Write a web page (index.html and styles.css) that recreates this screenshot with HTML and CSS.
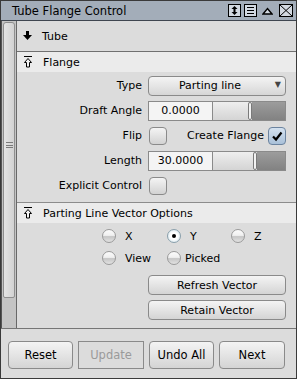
FILE: index.html
```html
<!DOCTYPE html>
<html lang="en">

<head>
  <meta charset="UTF-8">
  <title>Tube Flange Control</title>
  <link rel="stylesheet" href="styles.css">
</head>

<body>

  <div class="window">

    <div class="titlebar">
      <span class="title">Tube Flange Control</span>
      <div class="tb-icons">
        <svg class="tb-box" width="13" height="13" viewBox="0 0 13 13">
          <rect x="0.5" y="0.5" width="12" height="12" fill="#d3d9e1" stroke="#000"/>
          <polygon points="6.5,2 3.5,5 9.5,5" fill="#000"/>
          <rect x="5.5" y="4.5" width="2" height="4" fill="#000"/>
          <polygon points="3.5,8 9.5,8 6.5,11" fill="#000"/>
        </svg>
        <svg class="tb-box" width="13" height="13" viewBox="0 0 13 13">
          <rect x="0.5" y="0.5" width="12" height="12" fill="#d3d9e1" stroke="#000"/>
          <path d="M3 3.5H10M3 6.5H10M3 9.5H10" stroke="#000" stroke-width="1"/>
        </svg>
        <svg class="tb-tri" width="11" height="13" viewBox="0 0 11 13">
          <polygon points="1,10 5.5,4.5 10,10" fill="#d3d9e1" stroke="#000" stroke-width="1.4"/>
        </svg>
        <svg class="tb-box" width="14" height="13" viewBox="0 0 14 13">
          <rect x="0.5" y="0.5" width="13" height="12" fill="#d3d9e1" stroke="#000"/>
          <path d="M1 1L13 12M13 1L1 12" stroke="#000" stroke-width="1"/>
        </svg>
      </div>
    </div>

    <div class="main">
      <div class="scroll">
        <div class="thumb">
          <span class="grip"></span>
        </div>
      </div>

      <div class="content">
        <div class="sec-head tube">
          <svg width="9" height="10" viewBox="0 0 9 10">
            <rect x="3" y="0" width="3" height="4" fill="#000"/>
            <polygon points="0,4 9,4 4.5,9" fill="#000"/>
          </svg>
          <span>Tube</span>
        </div>

        <div class="sec-head open">
          <svg width="10" height="12" viewBox="0 0 10 12">
            <path d="M1 0.5H9" stroke="#000"/>
            <polygon points="5,2.5 1.5,6.5 3.5,6.5 3.5,11 6.5,11 6.5,6.5 8.5,6.5" fill="#f4f4f4" stroke="#000"/>
          </svg>
          <span>Flange</span>
        </div>

        <div class="form">
          <div class="row">
            <label>Type</label>
            <div class="select">
              <span>Parting line</span>
              <span class="arrow">▼</span>
            </div>
          </div>

          <div class="row">
            <label>Draft Angle</label>
            <div class="field">
              <div class="num">0.0000</div>
              <div class="slider">
                <div class="fill" style="width: 35px"></div>
                <div class="knob"></div>
                <div class="rest"></div>
              </div>
            </div>
          </div>

          <div class="row">
            <label>Flip</label>
            <div class="split">
              <span class="check"></span>
              <div class="pair">
                <span>Create Flange</span>
                <span class="check on">
                  <svg width="14" height="14" viewBox="0 0 14 14">
                    <path d="M3 7.5L6 10.5L11.5 3.5" fill="none" stroke="#000" stroke-width="2.2"/>
                  </svg>
                </span>
              </div>
            </div>
          </div>

          <div class="row">
            <label>Length</label>
            <div class="field">
              <div class="num">30.0000</div>
              <div class="slider">
                <div class="fill" style="width: 40px"></div>
                <div class="knob"></div>
                <div class="rest"></div>
              </div>
            </div>
          </div>

          <div class="row">
            <label>Explicit Control</label>
            <div class="split">
              <span class="check"></span>
            </div>
          </div>
        </div>

        <div class="sec-head open">
          <svg width="10" height="12" viewBox="0 0 10 12">
            <path d="M1 0.5H9" stroke="#000"/>
            <polygon points="5,2.5 1.5,6.5 3.5,6.5 3.5,11 6.5,11 6.5,6.5 8.5,6.5" fill="#f4f4f4" stroke="#000"/>
          </svg>
          <span>Parting Line Vector Options</span>
        </div>

        <div class="radios">
          <div class="radio"><span class="dot"></span>X</div>
          <div class="radio"><span class="dot on"></span>Y</div>
          <div class="radio"><span class="dot"></span>Z</div>
          <div class="radio"><span class="dot"></span>View</div>
          <div class="radio tight"><span class="dot"></span>Picked</div>
        </div>

        <div class="vec-btns">
          <button class="btn">Refresh Vector</button>
          <button class="btn">Retain Vector</button>
        </div>
      </div>
    </div>

    <div class="footer">
      <button class="btn big">Reset</button>
      <button class="btn big off">Update</button>
      <button class="btn big">Undo All</button>
      <button class="btn big">Next</button>
    </div>

  </div>

</body>

</html>
```

FILE: styles.css
```css
* {
  box-sizing: border-box;
}

body {
  margin: 0;
  font-family: "DejaVu Sans", sans-serif;
  font-size: 11px;
  color: #000;
  background: #dcdcdc;
}

.window {
  width: 297px;
  height: 379px;
  border: 1px solid #3a3a3a;
  background: #dcdcdc;
  display: flex;
  flex-direction: column;
}

/* title bar */

.titlebar {
  height: 20px;
  flex: none;
  background: #a3adb9;
  border-bottom: 1px solid #3f4650;
  display: flex;
  align-items: center;
  padding-left: 11px;
  padding-right: 3px;
}

.title {
  font-size: 11.5px;
  flex: 1;
  padding-top: 1px;
}

.tb-icons {
  display: flex;
  align-items: center;
  gap: 3px;
}

.tb-tri {
  margin: 0 3px 0 2px;
}

/* main area */

.main {
  height: 308px;
  flex: none;
  display: flex;
  border-bottom: 1px solid #767676;
}

.scroll {
  width: 16px;
  flex: none;
  background: #c4c4c4;
  border-left: 1px solid #555;
  border-right: 1px solid #686868;
  padding: 1px 1px 0 1px;
}

.thumb {
  height: 276px;
  border: 1px solid #8e8e8e;
  border-radius: 3px 3px 2px 2px;
  background: linear-gradient(to right, #e4e4e4, #d2d2d2);
  position: relative;
}

.grip {
  position: absolute;
  left: 2px;
  top: 119px;
  width: 7px;
  height: 6px;
  border-top: 1px solid #7a7a7a;
  border-bottom: 1px solid #7a7a7a;
}

.grip::after {
  content: "";
  position: absolute;
  left: 0;
  right: 0;
  top: 1.5px;
  border-top: 1px solid #7a7a7a;
}

.content {
  flex: 1;
  display: flex;
  flex-direction: column;
}

.sec-head {
  display: flex;
  align-items: center;
  gap: 10px;
  padding-left: 6px;
}

.sec-head.tube {
  height: 31px;
  border-bottom: 1px solid #707070;
}

.sec-head.open {
  height: 20px;
  background: #ebebeb;
}

/* form rows */

.form {
  padding: 1px 0 4px 0;
  border-bottom: 1px solid #8c8c8c;
}

.row {
  height: 25px;
  display: grid;
  grid-template-columns: 125px 138px;
  column-gap: 6px;
  align-items: center;
}

.row label {
  text-align: right;
}

.select {
  height: 20px;
  border: 1px solid #8a8a8a;
  border-radius: 4px;
  background: linear-gradient(#f4f4f4, #d6d6d6);
  display: flex;
  align-items: center;
  justify-content: center;
  padding-right: 14px;
  position: relative;
}

.arrow {
  position: absolute;
  right: 4px;
  top: 3px;
  font-size: 8px;
  color: #444;
}

.field {
  height: 20px;
  display: flex;
}

.num {
  width: 65px;
  border: 1px solid #8a8a8a;
  background: #f4f4f4;
  display: flex;
  align-items: center;
  justify-content: center;
}

.slider {
  flex: 1;
  display: flex;
  border: 1px solid #8a8a8a;
  border-left: none;
}

.fill {
  background: linear-gradient(#eeeeee, #d4d4d4);
}

.knob {
  width: 4px;
  background: #f2f2f2;
  border: 1px solid #7a7a7a;
  border-radius: 2px;
}

.rest {
  flex: 1;
  background: linear-gradient(#9c9c9c, #828282);
}

.split {
  display: flex;
  align-items: center;
  justify-content: space-between;
  padding-left: 1px;
}

.pair {
  display: flex;
  align-items: center;
  gap: 4px;
}

.check {
  width: 18px;
  height: 18px;
  border: 1px solid #8a8a8a;
  border-radius: 4px;
  background: linear-gradient(#f4f4f4, #d2d2d2);
  display: flex;
  align-items: center;
  justify-content: center;
}

.check.on {
  background: linear-gradient(#d4e2f0, #a9c0d8);
  border-color: #6c84a0;
}

/* radios */

.radios {
  display: grid;
  grid-template-columns: 65px 64px 60px;
  grid-auto-rows: 22px;
  padding: 2px 0 0 85px;
}

.radio {
  display: flex;
  align-items: center;
  gap: 9px;
}

.radio.tight {
  gap: 4px;
}

.dot {
  width: 14px;
  height: 14px;
  border: 1px solid #9a9a9a;
  border-radius: 50%;
  background: linear-gradient(#fbfbfb 0%, #f0f0f0 45%, #c6c6c6 55%, #e2e2e2 100%);
  display: flex;
  align-items: center;
  justify-content: center;
}

.dot.on {
  background: radial-gradient(circle, #ffffff 40%, #c9dde6 100%);
  border-color: #8aa0ac;
}

.dot.on::after {
  content: "";
  width: 4px;
  height: 4px;
  border-radius: 50%;
  background: #000;
}

/* buttons */

.vec-btns {
  display: flex;
  flex-direction: column;
  gap: 5px;
  padding: 6px 0 0 131px;
}

.btn {
  font-family: "DejaVu Sans", sans-serif;
  font-size: 11px;
  color: #000;
  height: 20px;
  width: 138px;
  border: 1px solid #8a8a8a;
  border-radius: 4px;
  background: linear-gradient(#f4f4f4, #d4d4d4);
  padding: 0;
}

.footer {
  flex: 1;
  display: flex;
  gap: 5px;
  padding: 12px 0 0 7px;
}

.btn.big {
  height: 28px;
  width: 65px;
  font-size: 11.5px;
}

.btn.big:nth-child(even) {
  width: 66px;
}

.btn.off {
  background: #dcdcdc;
  border-radius: 0;
  color: #9a9a9a;
}
```
